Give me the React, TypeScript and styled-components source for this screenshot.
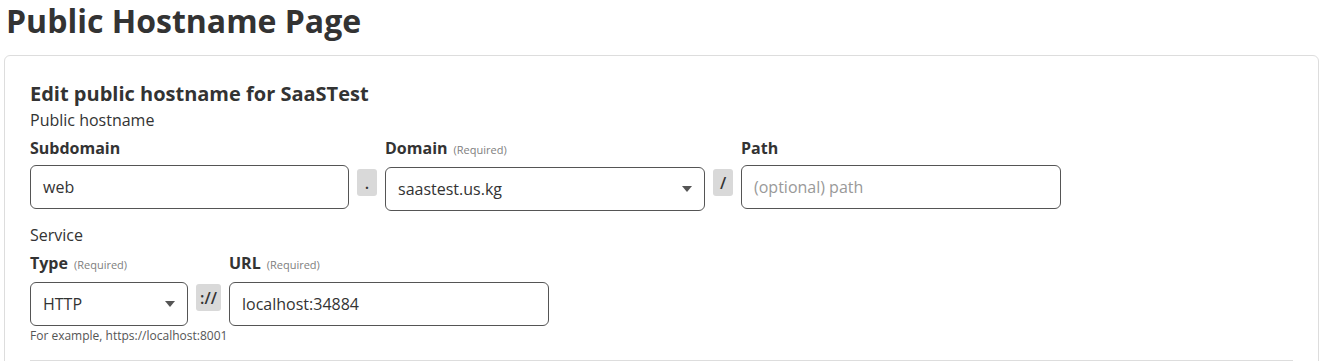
import React from "react";
import styled, { createGlobalStyle } from "styled-components";

const GlobalStyle = createGlobalStyle`
  html, body {
    margin: 0;
    padding: 0;
    background: #fff;
    color: #333;
    font-family: "Open Sans", "Noto Sans", sans-serif;
  }
`;

const Page = styled.div`
  padding: 0 2px 0 4px;
`;

const Title = styled.h1`
  margin: 0;
  padding: 0 2px;
  font-size: 32px;
  line-height: 42px;
  font-weight: 700;
  color: #333;
`;

const Card = styled.section`
  margin-top: 13px;
  border: 1px solid #ddd;
  border-radius: 6px;
  padding: 23px 25px 0 25px;
  height: 320px;
`;

const CardTitle = styled.h2`
  margin: 0;
  font-size: 20px;
  line-height: 30px;
  font-weight: 700;
`;

const GroupLabel = styled.div`
  font-size: 16px;
  line-height: 22px;
`;

const Row = styled.div`
  display: flex;
  align-items: flex-start;
  margin-top: 6px;
`;

const Field = styled.div<{ $w: number }>`
  width: ${(p) => p.$w}px;
  display: flex;
  flex-direction: column;
`;

const Label = styled.label`
  font-size: 16px;
  line-height: 22px;
  font-weight: 700;
  margin-bottom: 6px;
`;

const Req = styled.span`
  font-size: 11px;
  font-weight: 400;
  color: #808080;
  margin-left: 6px;
`;

const Input = styled.div<{ $placeholder?: boolean }>`
  box-sizing: border-box;
  height: 44px;
  border: 1px solid #555;
  border-radius: 6px;
  padding: 0 12px;
  display: flex;
  align-items: center;
  justify-content: space-between;
  font-size: 16px;
  color: ${(p) => (p.$placeholder ? "#999" : "#333")};
`;

const Caret = styled.span`
  width: 0;
  height: 0;
  border-left: 5px solid transparent;
  border-right: 5px solid transparent;
  border-top: 6px solid #555;
`;

const Sep = styled.div<{ $w: number }>`
  width: ${(p) => p.$w}px;
  height: 27px;
  margin: 32px 8px 0 8px;
  background: #d9d9d9;
  border-radius: 3px;
  display: flex;
  align-items: center;
  justify-content: center;
  font-size: 16px;
  font-weight: 600;
  color: #333;
`;

const Help = styled.div`
  font-size: 12px;
  line-height: 16px;
  color: #555;
  margin-top: 2px;
  white-space: nowrap;
`;

const Section = styled.div`
  margin-top: 13px;
`;

const Divider = styled.hr`
  border: 0;
  border-top: 1px solid #ddd;
  margin: 16px 0 0;
`;

export default function App() {
  return (
    <Page>
      <GlobalStyle />
      <Title>Public Hostname Page</Title>
      <Card>
        <CardTitle>Edit public hostname for SaaSTest</CardTitle>
        <GroupLabel>Public hostname</GroupLabel>
        <Row>
          <Field $w={319}>
            <Label>Subdomain</Label>
            <Input>web</Input>
          </Field>
          <Sep $w={20}>.</Sep>
          <Field $w={320}>
            <Label>
              Domain<Req>(Required)</Req>
            </Label>
            <Input>
              saastest.us.kg
              <Caret />
            </Input>
          </Field>
          <Sep $w={20}>/</Sep>
          <Field $w={320}>
            <Label>Path</Label>
            <Input $placeholder>(optional) path</Input>
          </Field>
        </Row>
        <Section>
          <GroupLabel>Service</GroupLabel>
          <Row>
            <Field $w={158}>
              <Label>
                Type<Req>(Required)</Req>
              </Label>
              <Input>
                HTTP
                <Caret />
              </Input>
              <Help>For example, https://localhost:8001</Help>
            </Field>
            <Sep $w={25}>://</Sep>
            <Field $w={320}>
              <Label>
                URL<Req>(Required)</Req>
              </Label>
              <Input>localhost:34884</Input>
            </Field>
          </Row>
        </Section>
        <Divider />
      </Card>
    </Page>
  );
}
